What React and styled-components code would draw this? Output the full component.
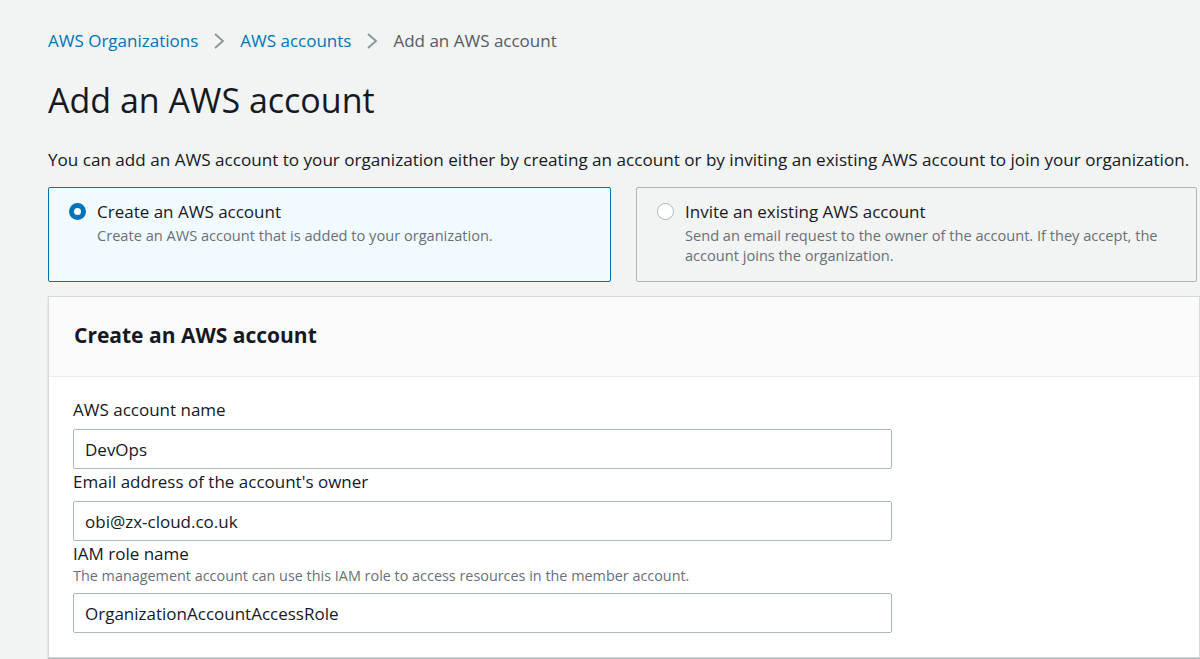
import styled, { createGlobalStyle } from "styled-components";

const GlobalStyle = createGlobalStyle`
  html, body {
    margin: 0;
    padding: 0;
    background: #f2f3f3;
  }

  body {
    font-family: "Open Sans", "Liberation Sans", sans-serif;
    color: #16191f;
  }
`;

const Page = styled.div`
  padding: 29px 0 0 48px;
  height: 659px;
  box-sizing: border-box;
  overflow: hidden;
`;

const Breadcrumbs = styled.nav`
  display: flex;
  align-items: center;
  gap: 14px;
  font-size: 17px;
  line-height: 24px;
`;

const Crumb = styled.span`
  color: ${(p) => (p.$current ? "#545b64" : "#0073bb")};
`;

const Chevron = styled.svg`
  width: 14px;
  height: 20px;
`;

const Title = styled.h1`
  margin: 25px 0 0;
  font-size: 34px;
  font-weight: 400;
  line-height: 44px;
  color: #16191f;
`;

const Intro = styled.p`
  margin: 27px 0 0;
  font-size: 17.1px;
  line-height: 22px;
`;

const Choices = styled.div`
  display: grid;
  grid-template-columns: 563px 561px;
  gap: 25px;
  margin-top: 16px;
`;

const Choice = styled.label`
  display: flex;
  gap: 11px;
  height: 95px;
  box-sizing: border-box;
  padding: 12px 20px;
  border: 1px solid ${(p) => (p.$selected ? "#0073bb" : "#aab7b8")};
  border-radius: 2px;
  background: ${(p) => (p.$selected ? "#f1faff" : "#f2f3f3")};
`;

const Radio = styled.span`
  flex: none;
  width: 17px;
  height: 17px;
  margin-top: 3px;
  border-radius: 50%;
  box-sizing: border-box;
  background: #fff;
  border: ${(p) => (p.$checked ? "5px solid #0073bb" : "1.5px solid #aab7b8")};
`;

const ChoiceText = styled.div`
  display: flex;
  flex-direction: column;
`;

const ChoiceTitle = styled.span`
  font-size: 17px;
  line-height: 23px;
  margin-bottom: 2px;
`;

const ChoiceHint = styled.span`
  font-size: 14.6px;
  line-height: 20px;
  color: #687078;
  padding-right: 8px;
`;

const Panel = styled.section`
  margin-top: 14px;
  width: 1150px;
  background: #fff;
  border: 1px solid #d5dbdb;
  box-shadow: 0 1px 1px 0 rgba(0, 28, 36, 0.3);
`;

const PanelHeader = styled.header`
  height: 80px;
  display: flex;
  align-items: center;
  padding: 0 25px 4px;
  box-sizing: border-box;
  background: #fafafa;
  border-bottom: 1px solid #eaeded;
`;

const PanelTitle = styled.h2`
  margin: 0;
  font-size: 21px;
  font-weight: 700;
  color: #16191f;
`;

const PanelBody = styled.div`
  padding: 21px 24px 24px;
  display: flex;
  flex-direction: column;
  gap: 1px;
`;

const Field = styled.div`
  display: flex;
  flex-direction: column;
`;

const Label = styled.span`
  font-size: 17px;
  line-height: 24px;
`;

const Hint = styled.span`
  font-size: 14.4px;
  line-height: 20px;
  color: #687078;
`;

const Input = styled.input`
  margin-top: 7px;
  width: 819px;
  height: 40px;
  box-sizing: border-box;
  padding: 0 11px;
  border: 1px solid #aab7b8;
  border-radius: 2px;
  font-family: inherit;
  font-size: 17px;
  color: #16191f;
  background: #fff;
`;

export default function App() {
  return (
    <>
      <GlobalStyle />
      <Page>
        <Breadcrumbs>
          <Crumb>AWS Organizations</Crumb>
          <Chevron viewBox="0 0 14 20">
            <path d="M3 3l8 7-8 7" fill="none" stroke="#879596" strokeWidth="1.8" />
          </Chevron>
          <Crumb>AWS accounts</Crumb>
          <Chevron viewBox="0 0 14 20">
            <path d="M3 3l8 7-8 7" fill="none" stroke="#879596" strokeWidth="1.8" />
          </Chevron>
          <Crumb $current>Add an AWS account</Crumb>
        </Breadcrumbs>

        <Title>Add an AWS account</Title>

        <Intro>
          You can add an AWS account to your organization either by creating an account or by
          inviting an existing AWS account to join your organization.
        </Intro>

        <Choices>
          <Choice $selected>
            <Radio $checked />
            <ChoiceText>
              <ChoiceTitle>Create an AWS account</ChoiceTitle>
              <ChoiceHint>Create an AWS account that is added to your organization.</ChoiceHint>
            </ChoiceText>
          </Choice>
          <Choice>
            <Radio />
            <ChoiceText>
              <ChoiceTitle>Invite an existing AWS account</ChoiceTitle>
              <ChoiceHint>
                Send an email request to the owner of the account. If they accept, the account
                joins the organization.
              </ChoiceHint>
            </ChoiceText>
          </Choice>
        </Choices>

        <Panel>
          <PanelHeader>
            <PanelTitle>Create an AWS account</PanelTitle>
          </PanelHeader>
          <PanelBody>
            <Field>
              <Label>AWS account name</Label>
              <Input defaultValue="DevOps" />
            </Field>
            <Field>
              <Label>Email address of the account's owner</Label>
              <Input defaultValue="obi@zx-cloud.co.uk" />
            </Field>
            <Field>
              <Label>IAM role name</Label>
              <Hint>The management account can use this IAM role to access resources in the member account.</Hint>
              <Input defaultValue="OrganizationAccountAccessRole" />
            </Field>
          </PanelBody>
        </Panel>
      </Page>
    </>
  );
}
